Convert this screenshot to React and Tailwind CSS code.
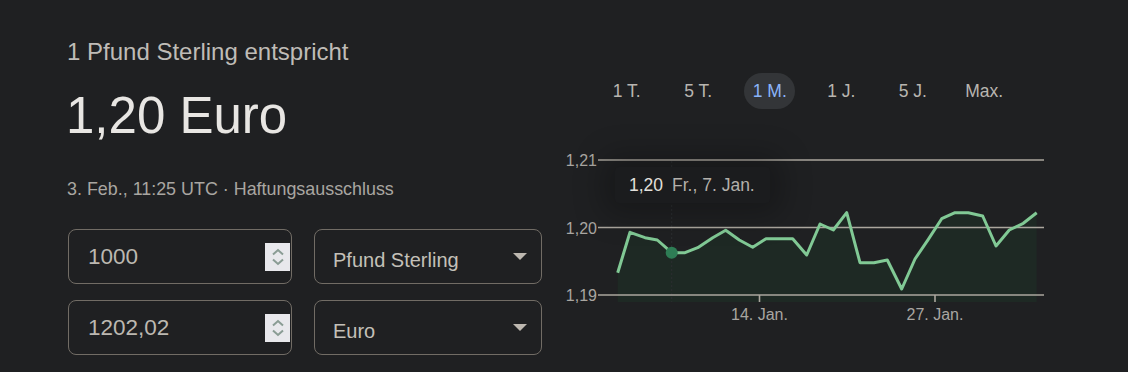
import React from "react";

const points = [
  [617.7, 272.7], [630, 232.3], [645, 237.7], [657.3, 240], [671.7, 252.7],
  [685, 252.7], [697.7, 247.7], [712.7, 237.7], [725.7, 230.3], [739.3, 240],
  [752.7, 247.3], [766, 238.7], [779.3, 238.7], [792.7, 238.7], [806.7, 255],
  [820, 224], [833.3, 230], [846.7, 212.7], [860, 262.7], [874, 262.7],
  [887.3, 260], [901.7, 289], [915, 259], [928.3, 239.3], [941.7, 218.7],
  [955, 212.7], [968.3, 212.7], [982.7, 216], [996, 246], [1009.3, 230],
  [1023.3, 223.3], [1036.7, 212.7],
];

const ranges = ["1 T.", "5 T.", "1 M.", "1 J.", "5 J.", "Max."];

const Spinner = () => (
  <div className="ml-auto mr-px flex h-7 w-[25px] items-center justify-center bg-[#e8e8ec]">
    <svg width="14" height="18" viewBox="0 0 14 18" fill="none">
      <path d="M2 6.5 L7 2 L12 6.5" stroke="#8a9c94" strokeWidth="2" />
      <path d="M2 11.5 L7 16 L12 11.5" stroke="#8a9c94" strokeWidth="2" />
    </svg>
  </div>
);

const Select = ({ label }) => (
  <div className="flex h-[55px] w-[228px] items-center rounded-lg border border-[#716c65] pl-[18px] pr-[14px]">
    <span className="mt-[7px] text-[20px] leading-5 text-[#c4c0b9]">{label}</span>
    {/* dropdown arrow */}
    <div className="ml-auto h-0 w-0 border-x-[7px] border-t-[7px] border-x-transparent border-t-[#bdb8b0]" />
  </div>
);

const NumberField = ({ value }) => (
  <div className="flex h-[55px] w-[224px] items-center rounded-lg border border-[#716c65] pl-[19px]">
    <span className="text-[22.5px] leading-6 text-[#bcb8b1]">{value}</span>
    <Spinner />
  </div>
);

const Chart = () => {
  const line = points.map((p, i) => `${i ? "L" : "M"}${p[0]} ${p[1]}`).join(" ");
  const area = `${line} L1036.7 302 L617.7 302 Z`;
  const grid = [
    [160, "1,21"],
    [227.5, "1,20"],
    [295, "1,19"],
  ];

  return (
    <div className="relative mt-[31px] h-[190px] w-[510px]">
      <svg width="510" height="190" viewBox="550 140 510 190" className="block">
        <path d={area} fill="#1e2924" />
        <line x1="671.7" y1="161" x2="671.7" y2="302" stroke="#2c2e30" strokeWidth="1" strokeDasharray="2 2" />
        {grid.map(([y, label]) => (
          <g key={label}>
            <line x1="598" y1={y} x2="1044" y2={y} stroke="#aba69e" strokeWidth="1.6" />
            <text x="597" y={y + 6} textAnchor="end" fontSize="16" fill="#a9a6a1" fontFamily="'Liberation Sans', Arial, sans-serif">
              {label}
            </text>
          </g>
        ))}
        <line x1="759.5" y1="295" x2="759.5" y2="302" stroke="#aba69e" strokeWidth="1.6" />
        <line x1="935" y1="295" x2="935" y2="302" stroke="#aba69e" strokeWidth="1.6" />
        <text x="759.5" y="320" textAnchor="middle" fontSize="16" fill="#a9a6a1" fontFamily="'Liberation Sans', Arial, sans-serif">
          14. Jan.
        </text>
        <text x="935" y="320" textAnchor="middle" fontSize="16" fill="#a9a6a1" fontFamily="'Liberation Sans', Arial, sans-serif">
          27. Jan.
        </text>
        <path d={line} fill="none" stroke="#81c995" strokeWidth="3" strokeLinejoin="round" />
        <circle cx="671.7" cy="252.7" r="6" fill="#2e7d55" />
      </svg>

      {/* hover tooltip */}
      <div className="absolute left-[65px] top-[27px] flex h-9 w-[155px] items-center gap-[9px] rounded bg-[#1b1c1e] pl-[14px] text-[17.5px] shadow-[0_0_30px_12px_rgba(0,0,0,0.25)]">
        <span className="text-[#e2e0dc]">1,20</span>
        <span className="text-[#b3b0ab]">Fr., 7. Jan.</span>
      </div>
    </div>
  );
};

export default function App() {
  return (
    <div className="flex h-[372px] w-[1128px] overflow-hidden bg-[#1f2022] font-['Liberation_Sans',Arial,sans-serif]">
      <div className="flex w-[550px] flex-col pl-[64px]">
        <div className="ml-[3px] pt-[38px] text-[24px] leading-[28px] text-[#bfbcb7]">1 Pfund Sterling entspricht</div>
        <div className="ml-[2px] mt-[21px] text-[51px] leading-[58px] text-[#e8e6e3]">1,20 Euro</div>
        <div className="ml-[3px] mt-[33px] text-[17.9px] leading-[22px] text-[#a9a6a1]">
          3. Feb., 11:25 UTC · Haftungsausschluss
        </div>

        <div className="ml-[4px] mt-[29px] flex flex-col gap-4">
          <div className="flex gap-[22px]">
            <NumberField value="1000" />
            <Select label="Pfund Sterling" />
          </div>
          <div className="flex gap-[22px]">
            <NumberField value="1202,02" />
            <Select label="Euro" />
          </div>
        </div>
      </div>

      <div className="flex w-[510px] flex-col">
        <div className="ml-[41px] mt-[73px] grid w-[429px] grid-cols-6">
          {ranges.map((r) => (
            <div key={r} className="flex h-9 items-center justify-center">
              {r === "1 M." ? (
                <span className="flex h-9 w-[51px] items-center justify-center rounded-full bg-[#333538] text-[17.5px] text-[#8ab4f8]">
                  {r}
                </span>
              ) : (
                <span className="text-[17.5px] text-[#b8b5b0]">{r}</span>
              )}
            </div>
          ))}
        </div>
        <Chart />
      </div>
    </div>
  );
}
